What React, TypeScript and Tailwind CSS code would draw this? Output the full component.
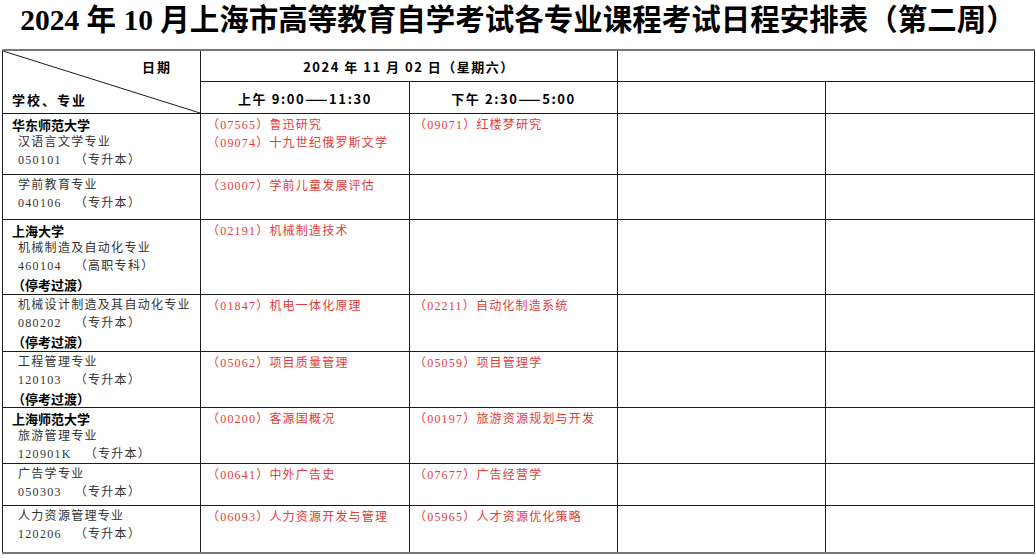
import React from "react";

type Line = { t: string; bold?: boolean };
type Row = { h: number; left: Line[]; am: string[]; pm: string[] };

const rows: Row[] = [
  {
    h: 61,
    left: [
      { t: "华东师范大学", bold: true },
      { t: "汉语言文学专业" },
      { t: "050101   （专升本）" },
    ],
    am: ["（07565）鲁迅研究", "（09074）十九世纪俄罗斯文学"],
    pm: ["（09071）红楼梦研究"],
  },
  {
    h: 45,
    left: [{ t: "学前教育专业" }, { t: "040106   （专升本）" }],
    am: ["（30007）学前儿童发展评估"],
    pm: [],
  },
  {
    h: 75,
    left: [
      { t: "上海大学", bold: true },
      { t: "机械制造及自动化专业" },
      { t: "460104   （高职专科）" },
      { t: "（停考过渡）", bold: true },
    ],
    am: ["（02191）机械制造技术"],
    pm: [],
  },
  {
    h: 57,
    left: [
      { t: "机械设计制造及其自动化专业" },
      { t: "080202   （专升本）" },
      { t: "（停考过渡）", bold: true },
    ],
    am: ["（01847）机电一体化原理"],
    pm: ["（02211）自动化制造系统"],
  },
  {
    h: 56,
    left: [{ t: "工程管理专业" }, { t: "120103   （专升本）" }, { t: "（停考过渡）", bold: true }],
    am: ["（05062）项目质量管理"],
    pm: ["（05059）项目管理学"],
  },
  {
    h: 56,
    left: [{ t: "上海师范大学", bold: true }, { t: "旅游管理专业" }, { t: "120901K   （专升本）" }],
    am: ["（00200）客源国概况"],
    pm: ["（00197）旅游资源规划与开发"],
  },
  {
    h: 42,
    left: [{ t: "广告学专业" }, { t: "050303   （专升本）" }],
    am: ["（00641）中外广告史"],
    pm: ["（07677）广告经营学"],
  },
  {
    h: 47,
    left: [{ t: "人力资源管理专业" }, { t: "120206   （专升本）" }],
    am: ["（06093）人力资源开发与管理"],
    pm: ["（05965）人才资源优化策略"],
  },
];

const cell = "border border-[#1a1a1a] align-top p-0";

const CourseList = ({ items, pl }: { items: string[]; pl: string }) => (
  <div className={`pt-[2px] ${pl} text-[12px] tracking-[1.2px] text-[#e23b3b]`}>
    {items.map((c) => (
      <div key={c} className="h-[18px] leading-[18px] whitespace-nowrap">
        {c}
      </div>
    ))}
  </div>
);

const App = () => {
  return (
    <div className="w-[1036px] h-[558px] bg-white overflow-hidden font-['Liberation_Serif','Noto_Sans_CJK_SC',serif] text-black">
      {/* Title */}
      <div className="h-[49px] flex justify-center">
        <h1 className="text-[29.5px] leading-[40px] font-bold whitespace-nowrap">
          2024 年 10 月上海市高等教育自学考试各专业课程考试日程安排表（第二周）
        </h1>
      </div>

      {/* Schedule table */}
      <table className="ml-[2px] w-[1032px] table-fixed border-collapse border-t-2 border-b-2 border-t-[#777] border-b-[#777]">
        <colgroup>
          <col className="w-[198px]" />
          <col className="w-[209px]" />
          <col className="w-[208px]" />
          <col className="w-[208px]" />
          <col className="w-[209px]" />
        </colgroup>
        <thead className="font-['Noto_Sans_CJK_SC',sans-serif] font-bold text-[13px]">
          <tr className="h-[31px]">
            <th rowSpan={2} className={`${cell} relative`}>
              <svg className="absolute inset-0 w-full h-full" preserveAspectRatio="none" viewBox="0 0 100 100">
                <line x1="0" y1="0" x2="100" y2="100" stroke="#1a1a1a" strokeWidth="1" vectorEffect="non-scaling-stroke" />
              </svg>
              <div className="relative flex flex-col justify-between h-[62px] pt-[6px] pb-[3px]">
                <div className="text-right pr-[28px] tracking-[2px] leading-[20px]">日期</div>
                <div className="text-left pl-[9px] tracking-[2px] leading-[20px]">学校、专业</div>
              </div>
            </th>
            <th colSpan={2} className={cell}>
              <div className="h-[30px] flex items-center justify-center pt-[2px] tracking-[1.5px]">
                2024 年 11 月 02 日（星期六）
              </div>
            </th>
            <th colSpan={2} className={cell}></th>
          </tr>
          <tr className="h-[32px]">
            <th className={cell}>
              <div className="h-[31px] flex items-center justify-center pt-[2px] tracking-[1.6px]">上午 9:00——11:30</div>
            </th>
            <th className={cell}>
              <div className="h-[31px] flex items-center justify-center pt-[2px] tracking-[1.6px]">下午 2:30——5:00</div>
            </th>
            <th className={cell}></th>
            <th className={cell}></th>
          </tr>
        </thead>
        <tbody>
          {rows.map((r, i) => (
            <tr key={i} style={{ height: r.h }}>
              <td className={cell}>
                <div className="pt-[1px] pl-[9px] text-[12px]">
                  {r.left.map((l, j) =>
                    l.bold ? (
                      <div
                        key={j}
                        className="h-[18px] leading-[19px] font-['Noto_Sans_CJK_SC',sans-serif] font-bold text-[13px] whitespace-nowrap"
                      >
                        {l.t}
                      </div>
                    ) : (
                      <div key={j} className="h-[18px] leading-[19px] pl-[6px] text-[#333] tracking-[1.3px] whitespace-pre">
                        {l.t}
                      </div>
                    )
                  )}
                </div>
              </td>
              <td className={cell}>
                <CourseList items={r.am} pl="pl-[6px]" />
              </td>
              <td className={cell}>
                <CourseList items={r.pm} pl="pl-[4px]" />
              </td>
              <td className={cell}></td>
              <td className={cell}></td>
            </tr>
          ))}
        </tbody>
      </table>
    </div>
  );
};

export default App;
